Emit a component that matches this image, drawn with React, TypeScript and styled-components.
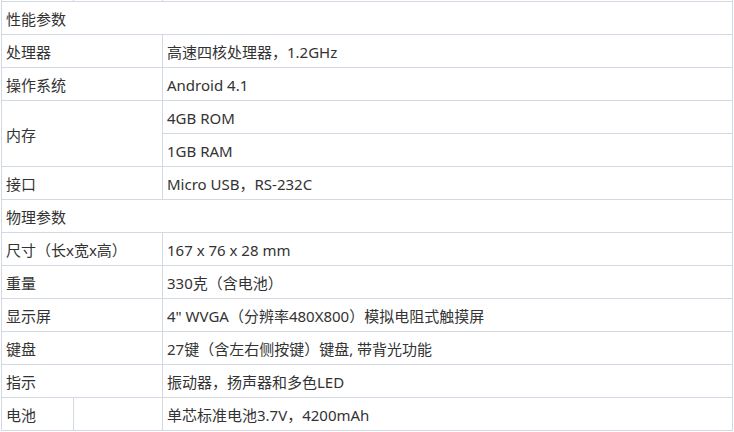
import React, { Fragment } from 'react';
import styled, { createGlobalStyle } from 'styled-components';

const GlobalStyle = createGlobalStyle`
	html,
	body {
		margin: 0;
		padding: 0;
		background: #ffffff;
	}
	body {
		font-family: 'Noto Sans', 'Noto Sans CJK SC', sans-serif;
		color: #333333;
	}
`;

interface SpecRow {
	label: string;
	values: string[];
	split?: boolean;
}

interface Section {
	title: string;
	rows: SpecRow[];
}

const sections: Section[] = [
	{
		title: '性能参数',
		rows: [
			{ label: '处理器', values: ['高速四核处理器，1.2GHz'] },
			{ label: '操作系统', values: ['Android 4.1'] },
			{ label: '内存', values: ['4GB ROM', '1GB RAM'] },
			{ label: '接口', values: ['Micro USB，RS-232C'] },
		],
	},
	{
		title: '物理参数',
		rows: [
			{ label: '尺寸（长x宽x高）', values: ['167 x 76 x 28 mm'] },
			{ label: '重量', values: ['330克（含电池）'] },
			{ label: '显示屏', values: ['4" WVGA（分辨率480X800）模拟电阻式触摸屏'] },
			{ label: '键盘', values: ['27键（含左右侧按键）键盘, 带背光功能'] },
			{ label: '指示', values: ['振动器，扬声器和多色LED'] },
			{ label: '电池', values: ['单芯标准电池3.7V，4200mAh'], split: true },
		],
	},
];

const App = () => {
	return (
		<Fragment>
			<GlobalStyle />
			<Viewport>
				<SpecTable>
					<colgroup>
						<col style={{ width: 72 }} />
						<col style={{ width: 89 }} />
						<col />
					</colgroup>
					<tbody>
						{/* row scrolled mostly out of view */}
						<tr>
							<Cell />
							<Cell />
							<Cell />
						</tr>
						{sections.map((section) => (
							<Fragment key={section.title}>
								<tr>
									<Cell colSpan={3}>{section.title}</Cell>
								</tr>
								{section.rows.map((row) =>
									row.values.map((value, i) => (
										<tr key={row.label + i}>
											{i === 0 &&
												(row.split ? (
													<Fragment>
														<Cell rowSpan={row.values.length}>{row.label}</Cell>
														<Cell rowSpan={row.values.length} />
													</Fragment>
												) : (
													<Cell colSpan={2} rowSpan={row.values.length}>
														{row.label}
													</Cell>
												))}
											<Cell>{value}</Cell>
										</tr>
									))
								)}
							</Fragment>
						))}
					</tbody>
				</SpecTable>
			</Viewport>
		</Fragment>
	);
};

const Viewport = styled.div`
	width: 734px;
	height: 432px;
	overflow: hidden;
	padding-left: 1px;
	box-sizing: border-box;
`;

const SpecTable = styled.table`
	width: 732px;
	margin-top: -32px;
	border-collapse: collapse;
	table-layout: fixed;
	font-size: 15px;
`;

const Cell = styled.td`
	height: 33px;
	padding: 2px 4px 0;
	border: 1px solid #d2d8e4;
	line-height: 20px;
	vertical-align: middle;
	white-space: nowrap;
	box-sizing: border-box;
`;

export default App;
